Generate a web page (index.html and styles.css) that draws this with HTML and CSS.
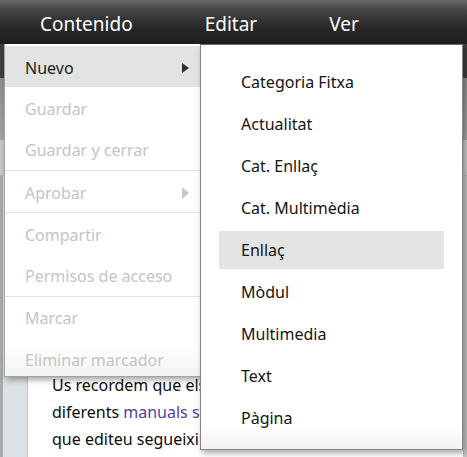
FILE: index.html
```html
<!DOCTYPE html>
<html lang="es">
<head>
<meta charset="utf-8">
<title>Menú Contenido</title>
<link rel="stylesheet" href="styles.css">
</head>
<body>
<div class="app">
  <header class="menubar">
    <span class="top-item">Contenido</span>
    <span class="top-item">Editar</span>
    <span class="top-item">Ver</span>
  </header>
  <div class="subbar"></div>
  <div class="toolbar"></div>
  <div class="tabs"></div>
  <div class="workspace">
    <aside class="side"></aside>
    <main class="content">
      <p class="line">Us recordem que els continguts de les pàgines han de</p>
      <p class="line">diferents <a class="link" href="#">manuals seguint</a> les indicacions.</p>
      <p class="line">que editeu segueixin les normes d'estil i les</p>
      <p class="line">recomanacions de redacció del portal web.</p>
    </main>
  </div>

  <nav class="menu main-menu">
    <div class="group">
      <div class="item active"><span>Nuevo</span><span class="arrow"></span></div>
      <div class="item disabled">Guardar</div>
      <div class="item disabled">Guardar y cerrar</div>
    </div>
    <div class="group">
      <div class="item disabled"><span>Aprobar</span><span class="arrow light"></span></div>
    </div>
    <div class="group">
      <div class="item disabled">Compartir</div>
      <div class="item disabled">Permisos de acceso</div>
    </div>
    <div class="group last">
      <div class="item disabled">Marcar</div>
      <div class="item disabled">Eliminar marcador</div>
    </div>
  </nav>

  <nav class="menu sub-menu">
    <div class="sub-item">Categoria Fitxa</div>
    <div class="sub-item">Actualitat</div>
    <div class="sub-item">Cat. Enllaç</div>
    <div class="sub-item">Cat. Multimèdia</div>
    <div class="sub-item hover">Enllaç</div>
    <div class="sub-item">Mòdul</div>
    <div class="sub-item">Multimedia</div>
    <div class="sub-item">Text</div>
    <div class="sub-item">Pàgina</div>
  </nav>
</div>
</body>
</html>
```

FILE: styles.css
```css
* { box-sizing: border-box; }
html, body { margin: 0; padding: 0; }
body {
  width: 467px;
  height: 457px;
  overflow: hidden;
  background: #ffffff;
  font-family: "Noto Sans", "Open Sans", "DejaVu Sans", sans-serif;
}
.app {
  position: relative;
  width: 467px;
  height: 457px;
  overflow: hidden;
  display: flex;
  flex-direction: column;
}
.menubar {
  height: 44px;
  flex: none;
  display: flex;
  align-items: center;
  gap: 72px;
  padding-left: 40px;
  padding-top: 4px;
  background: linear-gradient(to bottom, #6b6b6b 0px, #4a4a4a 8px, #333333 20px, #262626 30px, #1f1f1f 44px);
}
.top-item {
  color: #ffffff;
  font-size: 19px;
  line-height: 24px;
}
.subbar {
  height: 34px;
  flex: none;
  background: #3f3f3f;
}
.toolbar {
  height: 62px;
  flex: none;
  background: linear-gradient(to bottom, #8e8e8e, #a4a4a4);
}
.tabs {
  height: 36px;
  flex: none;
  background: #c9c9c9;
  border-bottom: 1px solid #b5b5b5;
}
.workspace {
  flex: 1;
  display: flex;
  border-right: 4px solid #c3c3c3;
}
.side {
  width: 28px;
  flex: none;
  background: #dce1e8;
  border-left: 3px solid #a9a9a9;
  border-right: 1px solid #c2c6cc;
}
.content {
  flex: 1;
  padding: 196px 0 0 24px;
  overflow: hidden;
}
.line {
  margin: 0;
  white-space: nowrap;
  font-size: 16px;
  line-height: 27px;
  color: #0c0c0c;
}
.link {
  color: #5b3aa0;
  text-decoration: none;
}

/* Menus */
.menu {
  position: absolute;
  background: #ffffff;
  box-shadow: 2px 3px 6px rgba(0, 0, 0, 0.35);
}
.main-menu {
  left: 4px;
  top: 44px;
  width: 198px;
  height: 333px;
  padding-top: 2px;
  border: 1px solid #a2a2a2;
  border-top: none;
  background: linear-gradient(to bottom, #ffffff 300px, #f3f3f3 333px);
}
.group {
  border-bottom: 1px solid #e2e2e2;
}
.group.last { border-bottom: none; }
.item {
  height: 41.3px;
  display: flex;
  align-items: center;
  justify-content: space-between;
  padding: 2px 12px 0 20px;
  font-size: 16px;
  color: #1c1c1c;
}
.item.active {
  background: #e2e3e3;
}
.item.disabled {
  color: #c4c4c4;
}
.arrow {
  width: 0;
  height: 0;
  border-top: 5px solid transparent;
  border-bottom: 5px solid transparent;
  border-left: 7px solid #2e2e2e;
}
.arrow.light {
  border-top-width: 6px;
  border-bottom-width: 6px;
  border-left-color: #c8c8c8;
}
.sub-menu {
  left: 200px;
  top: 44px;
  width: 263px;
  height: 406px;
  padding: 18px 18px 0 18px;
  border: 1px solid #858585;
  border-top-color: #6a6a6a;
  display: flex;
  flex-direction: column;
  gap: 4px;
  background: linear-gradient(to bottom, #ffffff 380px, #f1f1f1 406px);
}
.sub-item {
  height: 38px;
  flex: none;
  display: flex;
  align-items: center;
  padding-left: 22px;
  font-size: 16px;
  color: #141414;
}
.sub-item.hover {
  background: #e3e4e4;
}
```
